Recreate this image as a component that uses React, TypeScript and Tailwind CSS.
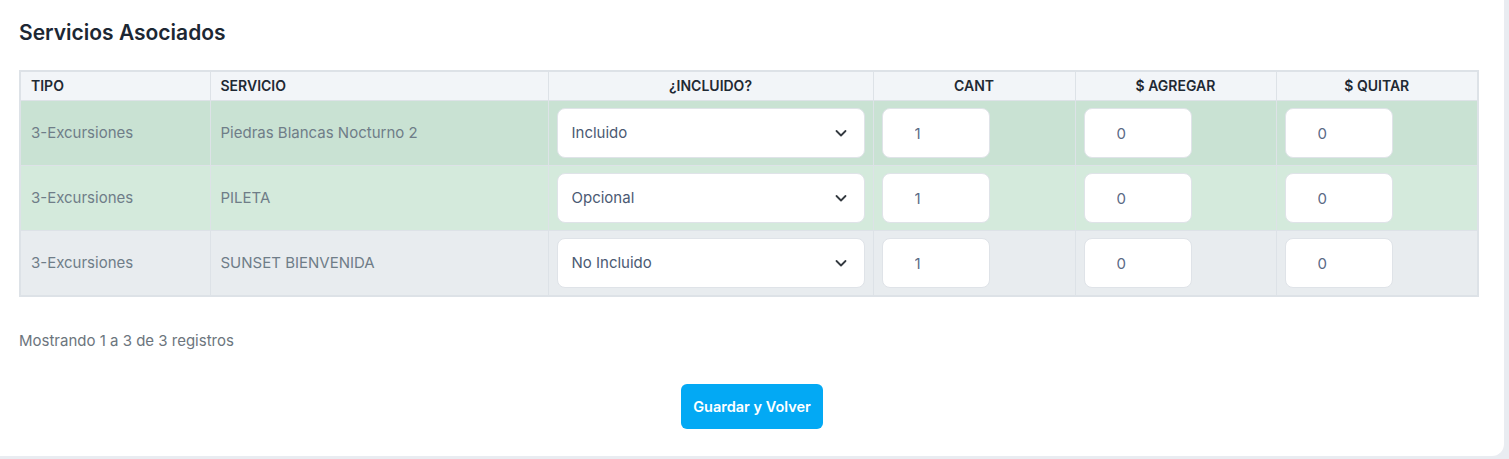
import { useState } from 'react';

interface Servicio {
  id: number;
  tipo: string;
  nombre: string;
  incluido: 'Incluido' | 'Opcional' | 'No Incluido';
  cant: number;
  agregar: number;
  quitar: number;
}

const servicios: Servicio[] = [
  { id: 1, tipo: '3-Excursiones', nombre: 'Piedras Blancas Nocturno 2', incluido: 'Incluido', cant: 1, agregar: 0, quitar: 0 },
  { id: 2, tipo: '3-Excursiones', nombre: 'PILETA', incluido: 'Opcional', cant: 1, agregar: 0, quitar: 0 },
  { id: 3, tipo: '3-Excursiones', nombre: 'SUNSET BIENVENIDA', incluido: 'No Incluido', cant: 1, agregar: 0, quitar: 0 },
];

// color de fila segun estado
const rowColor = (estado: Servicio['incluido']) => {
  switch (estado) {
    case 'Incluido':
      return 'bg-[#c9e2d3]';
    case 'Opcional':
      return 'bg-[#d4eadc]';
    default:
      return 'bg-[#e8ecef]';
  }
};

function SelectArrow() {
  return (
    <svg viewBox="0 0 16 16" className="w-4 h-4" fill="none">
      <path d="m3.5 6 4.5 4.5 4.5-4.5" stroke="#343a40" strokeWidth="1.8" strokeLinecap="round" strokeLinejoin="round" />
    </svg>
  );
}

export default function App() {
  const [rows, setRows] = useState(servicios);

  const update = (id: number, field: keyof Servicio, value: string) => {
    setRows(prev => prev.map(r => (r.id === id ? { ...r, [field]: value } : r)));
  };

  const th = 'border border-[#dde2e7] px-[10px] py-[6px] text-[14px] leading-4 font-semibold text-[#1f2933]';
  const td = 'border border-[#dde2e7] px-[8px] py-[7px]';
  const input =
    'w-[108px] h-[50px] rounded-lg bg-white border border-[#dfe3e8] pl-[32px] pr-2 text-[15px] text-[#5a6a85] outline-none';

  return (
    <div className="min-h-screen bg-[#e9ecf1] font-['Inter',sans-serif]">
      <div className="w-[1504px] h-[456px] bg-white rounded-br-xl px-[19px] pt-[19px]">
        <h2 className="text-[21px] leading-7 font-semibold text-[#1c2733]">Servicios Asociados</h2>

        <table className="mt-[23px] w-[1458px] border-collapse border-2 border-[#dde2e7] table-fixed">
          <colgroup>
            <col className="w-[190px]" />
            <col className="w-[338px]" />
            <col className="w-[325px]" />
            <col className="w-[202px]" />
            <col className="w-[201px]" />
            <col className="w-[202px]" />
          </colgroup>
          <thead className="bg-[#f2f5f8]">
            <tr>
              <th className={`${th} text-left`}>TIPO</th>
              <th className={`${th} text-left`}>SERVICIO</th>
              <th className={`${th} text-center`}>¿INCLUIDO?</th>
              <th className={`${th} text-center`}>CANT</th>
              <th className={`${th} text-center`}>$ AGREGAR</th>
              <th className={`${th} text-center`}>$ QUITAR</th>
            </tr>
          </thead>
          <tbody>
            {rows.map(r => (
              <tr key={r.id} className={rowColor(r.incluido)}>
                <td className={`${td} px-[10px] text-[15px] text-[#6f7d88]`}>{r.tipo}</td>
                <td className={`${td} px-[10px] text-[15px] text-[#6f7d88]`}>{r.nombre}</td>
                <td className={td}>
                  <div className="relative">
                    <select
                      value={r.incluido}
                      onChange={e => update(r.id, 'incluido', e.target.value)}
                      className="appearance-none w-full h-[50px] rounded-lg bg-white border border-[#dfe3e8] pl-[14px] pr-8 text-[15px] text-[#4b5a73] outline-none"
                    >
                      <option>Incluido</option>
                      <option>Opcional</option>
                      <option>No Incluido</option>
                    </select>
                    <span className="absolute right-[16px] top-1/2 -translate-y-1/2 pointer-events-none">
                      <SelectArrow />
                    </span>
                  </div>
                </td>
                <td className={td}>
                  <input className={input} value={r.cant} onChange={e => update(r.id, 'cant', e.target.value)} />
                </td>
                <td className={td}>
                  <input className={input} value={r.agregar} onChange={e => update(r.id, 'agregar', e.target.value)} />
                </td>
                <td className={td}>
                  <input className={input} value={r.quitar} onChange={e => update(r.id, 'quitar', e.target.value)} />
                </td>
              </tr>
            ))}
          </tbody>
        </table>

        <p className="mt-[34px] text-[15px] leading-5 text-[#6c757d]">Mostrando 1 a 3 de 3 registros</p>

        <div className="flex justify-center mt-[33px]">
          <button className="h-[45px] w-[142px] rounded-md bg-[#03a9f4] text-white text-[14.5px] font-semibold">
            Guardar y Volver
          </button>
        </div>
      </div>
    </div>
  );
}
